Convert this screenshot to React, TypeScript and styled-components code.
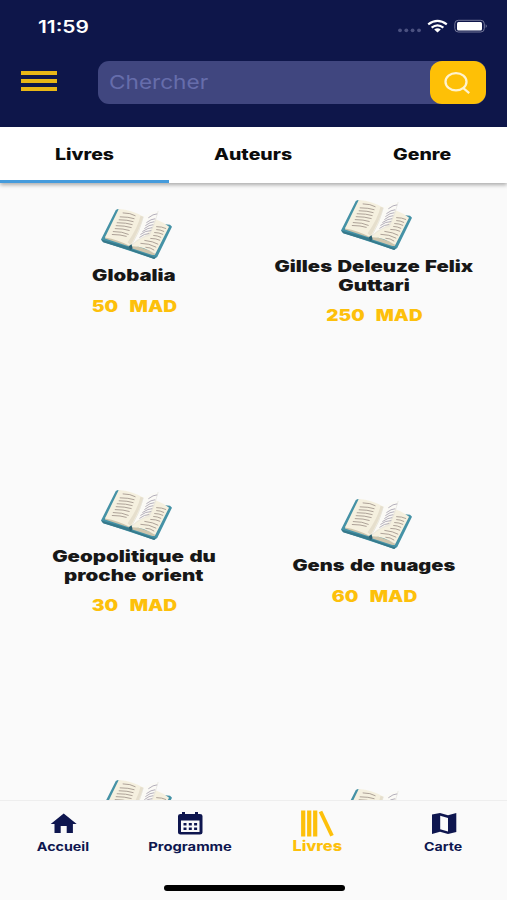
import React from 'react';
import styled, { createGlobalStyle } from 'styled-components';

const Global = createGlobalStyle`
  * { box-sizing: border-box; }
  body { margin: 0; font-family: Inter, "Liberation Sans", sans-serif; background: #fafafa; }
`;

const Screen = styled.div`
  width: 507px;
  height: 900px;
  overflow: hidden;
  display: flex;
  flex-direction: column;
  background: #fafafa;
`;

const Header = styled.header`
  height: 127px;
  flex: none;
  background: #0e164a;
`;

const StatusBar = styled.div`
  height: 61px;
  display: flex;
  align-items: flex-start;
  padding: 16px 19px 0 38px;
  color: #fff;
`;

const Stretch = styled.span<{ $x: number; $left?: boolean }>`
  display: block;
  width: fit-content;
  white-space: pre;
  transform: scaleX(${(p) => p.$x});
  transform-origin: ${(p) => (p.$left ? 'left' : 'center')};
`;

const Clock = styled.div`
  flex: 1;
  font-size: 17px;
  line-height: 22px;
  font-weight: 600;
`;

const Icon = styled.svg`
  display: block;
  flex: none;
`;

const SearchRow = styled.div`
  display: flex;
  align-items: center;
  padding: 0 21.5px 0 21px;
  height: 43px;
`;

const MenuButton = styled.button`
  border: 0;
  padding: 0;
  background: none;
  width: 36px;
  height: 20px;
  margin: -3px 41px 0 0;
  display: flex;
  flex-direction: column;
  justify-content: space-between;
`;

const MenuLine = styled.span`
  height: 4px;
  width: 36px;
  background: #e9b616;
`;

const SearchField = styled.div`
  flex: 1;
  height: 43px;
  border-radius: 11px;
  background: #40467f;
  color: #666dab;
  display: flex;
  align-items: center;
  padding-left: 11px;
  font-size: 19px;
`;

const SearchText = styled.div`
  flex: 1;
`;

const SearchButton = styled.button`
  border: 0;
  padding: 0;
  width: 55.5px;
  height: 43px;
  border-radius: 12px;
  background: #fec006;
  display: grid;
  place-items: center;
`;

const Tabs = styled.nav`
  height: 56px;
  flex: none;
  display: grid;
  grid-template-columns: repeat(3, 1fr);
  background: #fff;
  box-shadow: 0 2px 4px rgba(0, 0, 0, 0.32);
  z-index: 1;
`;

const Tab = styled.div<{ $active?: boolean }>`
  border-bottom: 3px solid ${(p) => (p.$active ? '#459bdc' : 'transparent')};
  display: flex;
  justify-content: center;
  padding-top: 17px;
  font-size: 15.5px;
  line-height: 22px;
  font-weight: 800;
  color: #0c0c0c;
`;

const Books = styled.main`
  height: 617px;
  flex: none;
  overflow: hidden;
  display: grid;
  grid-template-columns: 240px 240px;
  grid-auto-rows: 290px;
  padding-left: 14px;
`;

const BookCard = styled.article<{ $drop: number }>`
  display: flex;
  flex-direction: column;
  align-items: center;
  padding-top: ${(p) => 15 + p.$drop}px;
`;

const Cover = styled.svg`
  display: block;
  flex: none;
  margin-left: 4px;
`;

const Title = styled.h2`
  display: flex;
  flex-direction: column;
  align-items: center;
  margin: 7px 0 0;
  font-size: 15.5px;
  line-height: 18.7px;
  font-weight: 900;
  word-spacing: 1px;
  color: #171717;
`;

const Price = styled.div`
  margin-top: 11px;
  font-size: 15.5px;
  line-height: 20px;
  font-weight: 900;
  word-spacing: 1.5px;
  color: #fdc00b;
`;

const BottomBar = styled.nav`
  height: 100px;
  flex: none;
  border-top: 1px solid #eeeeee;
  background: #fafafa;
  display: flex;
  flex-direction: column;
  align-items: center;
`;

const BottomItems = styled.div`
  width: 507px;
  height: 84px;
  display: grid;
  grid-template-columns: repeat(4, 1fr);
`;

const BottomItem = styled.div<{ $active?: boolean }>`
  display: flex;
  flex-direction: column;
  align-items: center;
  padding-top: ${(p) => (p.$active ? 8 : 10)}px;
  gap: ${(p) => (p.$active ? 0 : 3)}px;
  color: ${(p) => (p.$active ? '#fdc00b' : '#0e164f')};
  font-size: ${(p) => (p.$active ? 14 : 12)}px;
  line-height: 18px;
  font-weight: ${(p) => (p.$active ? 800 : 700)};
`;

const HomeIndicator = styled.div`
  width: 181px;
  height: 6px;
  margin: 0 0 0 1px;
  border-radius: 3px;
  background: #000;
`;

const OpenBook = () => (
  <Cover width="71" height="53" viewBox="0 0 72 54" preserveAspectRatio="none">
    <path d="M17 2L15 3L0 33L3 36L54 53L57 51L72 20L70 18L61 17Z" fill="#4592a6" />
    <path d="M0 33L29 41L31 43L54 51L56 50L54 53L29 44L2 36Z" fill="#36798b" />
    <path d="M4 32L5 29L31 38L54 46L55 49L52 49L31 42L28 40Z" fill="#cec4ac" />
    <path d="M18 2Q32 3 43 10Q57 11 69 20L55 48Q42 39 30 40Q17 33 4 31Z" fill="#f5f0df" />
    <path d="M43 10Q39 23 30 39L27 36Q38 20 40 9Z" fill="#e6dfcd" />
    <path d="M43 10Q50 5 58 4Q54 15 51 22Q46 30 37 33L31 39Q41 22 43 10Z" fill="#fbfaf6" />
    <path d="M58 4Q55 17 49 29Q41 30 31 39Q39 26 43 10" fill="none" stroke="#e4e2dc" strokeWidth=".7" />
    <g stroke="#a3978e" strokeWidth=".9" fill="none">
      <path d="M22 6Q30 6 35 9M19 10Q28 10 34 12M18 13Q27 13 33 15M16 16Q26 16 32 18M15 19Q24 19 31 21M14 22Q23 22 29 24M12 25Q22 25 28 28M11 28Q20 28 26 30" />
      <path d="M56 20Q62 20 66 22M56 23Q60 23 64 25M54 26Q59 26 63 28M53 29Q57 29 61 31M50 32Q56 32 60 34M44 34Q53 35 58 38M40 37Q49 37 56 41M45 41Q50 41 54 44" />
      <path stroke="#aaa4b2" d="M48 11Q53 7 57 7M46 16Q51 12 55 12M45 19Q50 15 54 15M44 22Q49 18 53 18M42 25Q48 21 52 21M40 28Q45 24 51 24M39 31Q44 27 49 27" />
    </g>
    <path d="M28 40L31 38L32 42L30 44Z" fill="#2c6273" />
  </Cover>
);

type Line = [text: string, stretch: number];
type Book = { id: number; title?: Line[]; price?: Line; drop: number };

const books: Book[] = [
  { id: 1, title: [['Globalia', 1.31]], price: ['50  MAD', 1.24], drop: 9 },
  { id: 2, title: [['Gilles Deleuze Felix', 1.31], ['Guttari', 1.32]], price: ['250  MAD', 1.22], drop: 0 },
  { id: 3, title: [['Geopolitique du', 1.32], ['proche orient', 1.32]], price: ['30  MAD', 1.24], drop: 0 },
  { id: 4, title: [['Gens de nuages', 1.295]], price: ['60  MAD', 1.24], drop: 9 },
  { id: 5, drop: 0 },
  { id: 6, drop: 9 },
];

export default function App() {
  return (
    <>
      <Global />
      <Screen>
        <Header>
          <StatusBar>
            <Clock><Stretch $x={1.23} $left>11:59</Stretch></Clock>
            <Icon width="91" height="20" viewBox="0 0 91 20">
              <g fill="#4b5180">
                <circle cx="3" cy="14.3" r="1.9" /><circle cx="9.3" cy="14.3" r="1.9" />
                <circle cx="15.6" cy="14.3" r="1.9" /><circle cx="22" cy="14.3" r="1.9" />
              </g>
              <g fill="none" stroke="#fff" strokeWidth="2.2">
                <path d="M31.2 8.3Q40.5 1.3 49.8 8.3M34.6 11.6Q40.5 7 46.4 11.6" />
              </g>
              <path d="M37.2 13.4Q40.5 11.3 43.8 13.4L40.5 16.4Z" fill="#fff" />
              <rect x="57.8" y="4.3" width="29.5" height="11.7" rx="3.5" fill="none" stroke="#737799" />
              <rect x="60" y="6" width="25" height="8.4" rx="1.5" fill="#fff" />
              <path d="M88.7 8.2Q91 10 88.7 12Z" fill="#737799" />
            </Icon>
          </StatusBar>
          <SearchRow>
            <MenuButton aria-label="Menu"><MenuLine /><MenuLine /><MenuLine /></MenuButton>
            <SearchField>
              <SearchText><Stretch $x={1.19} $left>Chercher</Stretch></SearchText>
              <SearchButton aria-label="Chercher">
                <Icon width="28" height="24" viewBox="0 0 28 24" fill="none" stroke="#fff3cf" strokeWidth="2.3">
                  <ellipse cx="12" cy="10.8" rx="10.5" ry="8.6" /><path d="M19.2 17L25.2 22.2" />
                </Icon>
              </SearchButton>
            </SearchField>
          </SearchRow>
        </Header>
        <Tabs>
          <Tab $active><Stretch $x={1.26}>Livres</Stretch></Tab>
          <Tab><Stretch $x={1.26}>Auteurs</Stretch></Tab>
          <Tab><Stretch $x={1.26}>Genre</Stretch></Tab>
        </Tabs>
        <Books>
          {books.map((b) => (
            <BookCard key={b.id} $drop={b.drop}>
              <OpenBook />
              {b.title && (
                <Title>{b.title.map(([t, x]) => <Stretch key={t} $x={x}>{t}</Stretch>)}</Title>
              )}
              {b.price && <Price><Stretch $x={b.price[1]}>{b.price[0]}</Stretch></Price>}
            </BookCard>
          ))}
        </Books>
        <BottomBar>
          <BottomItems>
            <BottomItem>
              <Icon width="28" height="24" viewBox="0 0 28 24" fill="currentColor">
                <path d="M14.7 2.5L1.7 13H5.5V22H11.7V15H17.7V22H23.9V13H27.7Z" />
              </Icon>
              <Stretch $x={1.19}>Accueil</Stretch>
            </BottomItem>
            <BottomItem>
              <Icon width="28" height="24" viewBox="0 0 28 24">
                <path fill="currentColor" fillRule="evenodd" d="M6 1H9V3H19V1H22V3H24Q26.5 3 26.5 5V21.5Q26.5 23.5 24 23.5H4.5Q2 23.5 2 21.5V5Q2 3 4.5 3H6ZM5 9.5V21H23.5V9.5Z" />
                <path fill="currentColor" d="M7.5 12h3v2.5h-3zm5.3 0h3v2.5h-3zm5.3 0h3v2.5h-3zM7.5 16.5h3V19h-3zm5.3 0h3V19h-3zm5.3 0h3V19h-3z" />
              </Icon>
              <Stretch $x={1.23}>Programme</Stretch>
            </BottomItem>
            <BottomItem $active>
              <Icon width="34" height="28" viewBox="0 0 34 28" stroke="currentColor" strokeWidth="4.2">
                <path d="M3.2 1.5V27.5M9.2 1.5V27.5M15.2 1.5V27.5" /><path d="M20.5 2.5L32 26.8" strokeWidth="3.8" />
              </Icon>
              <Stretch $x={1.17}>Livres</Stretch>
            </BottomItem>
            <BottomItem>
              <Icon width="28" height="24" viewBox="0 0 28 24">
                <path fill="currentColor" fillRule="evenodd" d="M2 3.5L10 2L18 4.2L26.3 2V21L18 23L10 20.8L2 23ZM10.2 4.8V18.3L18 20.5V7Z" />
              </Icon>
              <Stretch $x={1.18}>Carte</Stretch>
            </BottomItem>
          </BottomItems>
          <HomeIndicator />
        </BottomBar>
      </Screen>
    </>
  );
}
